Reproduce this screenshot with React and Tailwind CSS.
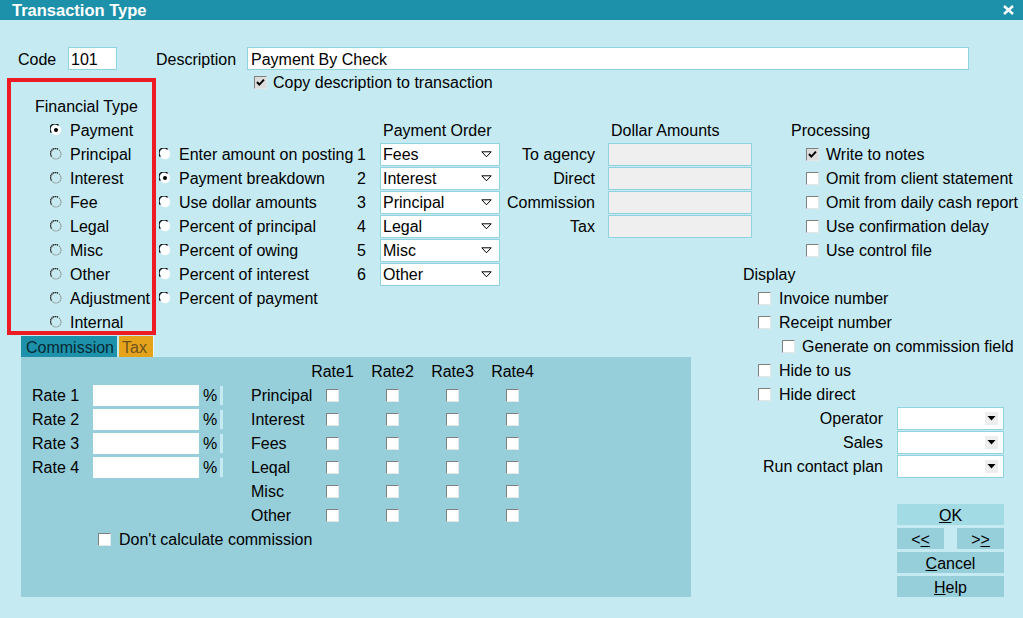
import React from "react";

const Check = ({ checked }) => (
  <span
    className={`relative inline-flex items-center justify-center w-[13px] h-[13px] shrink-0 border border-t-[#808080] border-l-[#808080] border-r-[#e6e6e6] border-b-[#e6e6e6] ${
      checked ? "bg-[#dcdcdc]" : "bg-white"
    }`}
  >
    {checked && (
      <svg width="11" height="11" viewBox="0 0 11 11">
        <path d="M2 5 L4.3 7.6 L9 2.6" stroke="#000" strokeWidth="1.9" fill="none" />
      </svg>
    )}
  </span>
);

const Radio = ({ on, dim }) => (
  <svg width="12" height="12" viewBox="0 0 12 12" className="shrink-0">
    {dim && !on ? (
      <>
        <circle cx="6" cy="6" r="5" fill="none" stroke="#8a8a8a" strokeWidth="1.1" strokeDasharray="1.3 0.7" />
        <path d="M1.4 8.4 A5 5 0 0 1 8.4 1.4" fill="none" stroke="#222" strokeWidth="1.1" strokeDasharray="1.5 0.5" />
      </>
    ) : (
      <>
        <circle cx="6" cy="6" r="5.2" fill="#fff" />
        <path d="M1.4 8.6 A5 5 0 0 1 8.6 1.4" fill="none" stroke="#000" strokeWidth="1.3" />
        {on && <circle cx="6" cy="6" r="2" fill="#000" />}
      </>
    )}
  </svg>
);

const T = ({ children, className = "" }) => <span className={`pt-[2px] ${className}`}>{children}</span>;

const Sel = ({ value }) => (
  <div className="w-[120px] h-[23px] bg-white border border-[#8fd3df] flex items-center justify-between pl-[2px] pr-[7px]">
    <T>{value}</T>
    <svg width="11" height="7" viewBox="0 0 11 7">
      <polygon points="0.8,0.8 10.2,0.8 5.5,5.8" fill="none" stroke="#000" strokeWidth="1" />
    </svg>
  </div>
);

const DropSel = () => (
  <div className="w-[107px] h-[23px] bg-white border border-[#8fd3df] flex items-center justify-end pr-[5px]">
    <span className="w-[13px] h-[13px] bg-[#eeeeee] flex items-center justify-center">
      <svg width="9" height="5" viewBox="0 0 9 5">
        <polygon points="0.5,0 8.5,0 4.5,4.5" fill="#000" />
      </svg>
    </span>
  </div>
);

const fin = ["Payment", "Principal", "Interest", "Fee", "Legal", "Misc", "Other", "Adjustment", "Internal"];

const mid = [
  ["Enter amount on posting", false, "1", "Fees", "To agency"],
  ["Payment breakdown", true, "2", "Interest", "Direct"],
  ["Use dollar amounts", false, "3", "Principal", "Commission"],
  ["Percent of principal", false, "4", "Legal", "Tax"],
  ["Percent of owing", false, "5", "Misc", null],
  ["Percent of interest", false, "6", "Other", null],
  ["Percent of payment", false, null, null, null],
];

const processing = [
  ["Write to notes", true],
  ["Omit from client statement", false],
  ["Omit from daily cash report", false],
  ["Use confirmation delay", false],
  ["Use control file", false],
];

const tableRows = ["Principal", "Interest", "Fees", "Leqal", "Misc", "Other"];

export default function App() {
  return (
    <div className="w-[1023px] h-[618px] bg-[#c5eaf2] text-black text-[16px] leading-none font-['Liberation_Sans',Arial,sans-serif] overflow-hidden">
      {/* Title bar */}
      <div className="h-[20px] bg-[#1e91aa] flex items-center justify-between pl-[12px] pr-[9px]">
        <span className="text-white font-bold text-[16.5px] pt-[1px]">Transaction Type</span>
        <svg width="11" height="10" viewBox="0 0 11 10">
          <path d="M1 1 L10 9 M10 1 L1 9" stroke="#fff" strokeWidth="2.4" />
        </svg>
      </div>

      {/* Code / Description */}
      <div className="flex items-center h-[23px] mt-[27px] pl-[18px]">
        <T className="w-[50px]">Code</T>
        <div className="w-[49px] h-[23px] bg-white border border-[#8fd3df] flex items-center pl-[2px]">
          <T>101</T>
        </div>
        <T className="ml-[39px] w-[91px]">Description</T>
        <div className="w-[722px] h-[23px] bg-white border border-[#8fd3df] flex items-center pl-[3px]">
          <T>Payment By Check</T>
        </div>
      </div>

      <div className="flex">
        {/* Left part */}
        <div className="w-[752px] shrink-0 pl-[7px] flex flex-col">
          <div className="flex">
            {/* Red box */}
            <div className="mt-[8px] w-[149px] shrink-0 h-[257px] border-4 border-[#ed1c24] pt-[12px]">
              <div className="h-[24px] flex items-center pl-[24px]">
                <T>Financial Type</T>
              </div>
              {fin.map((f, i) => (
                <div key={f} className="h-[24px] flex items-center gap-[8px] pl-[39px]">
                  <Radio on={i === 0} dim />
                  <T>{f}</T>
                </div>
              ))}
            </div>

            {/* Middle */}
            <div className="flex flex-col shrink-0">
              <div className="h-[24px] flex items-center gap-[6px] pl-[98px]">
                <Check checked />
                <T>Copy description to transaction</T>
              </div>
              <div className="h-[24px]" />
              <div className="h-[24px] flex items-center">
                <div className="w-[200px]" />
                <div className="w-[24px]" />
                <T className="w-[120px] pl-[3px]">Payment Order</T>
                <div className="w-[95px]" />
                <div className="w-[13px]" />
                <T className="pl-[3px]">Dollar Amounts</T>
              </div>
              {mid.map(([a, on, n, s, d]) => (
                <div key={a} className="h-[24px] flex items-center">
                  <div className="w-[200px] flex items-center gap-[8px] pl-[3px]">
                    <Radio on={on} />
                    <T>{a}</T>
                  </div>
                  <T className="w-[24px] text-right pr-[14px]">{n}</T>
                  <div className="w-[120px]">{s && <Sel value={s} />}</div>
                  <T className="w-[95px] text-right">{d}</T>
                  <div className="w-[13px]" />
                  {d && <div className="w-[144px] h-[23px] bg-[#efefef] border border-[#8fd3df]" />}
                </div>
              ))}
            </div>
          </div>

          {/* Tabs */}
          <div className="mt-[1px] ml-[14px] flex h-[21px] gap-[2px]">
            <div className="w-[96px] bg-[#1e91aa] text-[#062a32] flex items-center pl-[5px]">
              <T>Commission</T>
            </div>
            <div className="w-[35px] bg-[#e5a31b] text-[#6e5220] flex items-center pl-[3px] border-r border-[#e8f6f9]">
              <T>Tax</T>
            </div>
          </div>

          {/* Panel */}
          <div className="ml-[14px] w-[670px] h-[240px] bg-[#96ced9] pt-[2px] flex flex-col">
            <div className="flex">
              <div className="w-[230px] pt-[24px] pl-[11px]">
                {[1, 2, 3, 4].map((r) => (
                  <div key={r} className="h-[24px] flex items-center">
                    <T className="w-[61px]">Rate {r}</T>
                    <div className="w-[106px] h-[21px] bg-white" />
                    <T className="ml-[4px] w-[13px]">%</T>
                    <div className="ml-[4px] w-[3px] h-[19px] bg-[#c5eaf2]" />
                  </div>
                ))}
              </div>
              <div className="flex flex-col">
                <div className="h-[24px] flex items-center">
                  <div className="w-[51px]" />
                  {["Rate1", "Rate2", "Rate3", "Rate4"].map((r) => (
                    <T key={r} className="w-[60px] text-center pl-[1px]">{r}</T>
                  ))}
                </div>
                {tableRows.map((t) => (
                  <div key={t} className="h-[24px] flex items-center">
                    <T className="w-[51px]">{t}</T>
                    {[0, 1, 2, 3].map((c) => (
                      <div key={c} className="w-[60px] flex justify-center pl-[1px]">
                        <Check />
                      </div>
                    ))}
                  </div>
                ))}
              </div>
            </div>
            <div className="h-[24px] flex items-center gap-[8px] pl-[77px]">
              <Check />
              <T>Don't calculate commission</T>
            </div>
          </div>
        </div>

        {/* Right part */}
        <div className="flex-1 pt-[48px] flex flex-col">
          <div className="h-[24px] flex items-center pl-[39px]">
            <T>Processing</T>
          </div>
          {processing.map(([p, c]) => (
            <div key={p} className="h-[24px] flex items-center gap-[7px] pl-[54px]">
              <Check checked={c} />
              <T>{p}</T>
            </div>
          ))}
          <div className="h-[24px] flex items-center -ml-[9px]">
            <T>Display</T>
          </div>
          <div className="h-[24px] flex items-center gap-[8px] pl-[6px]">
            <Check />
            <T>Invoice number</T>
          </div>
          <div className="h-[24px] flex items-center gap-[8px] pl-[6px]">
            <Check />
            <T>Receipt number</T>
          </div>
          <div className="h-[24px] flex items-center gap-[7px] pl-[30px]">
            <Check />
            <T>Generate on commission field</T>
          </div>
          <div className="h-[24px] flex items-center gap-[8px] pl-[6px]">
            <Check />
            <T>Hide to us</T>
          </div>
          <div className="h-[24px] flex items-center gap-[8px] pl-[6px]">
            <Check />
            <T>Hide direct</T>
          </div>
          {["Operator", "Sales", "Run contact plan"].map((o) => (
            <div key={o} className="h-[24px] flex items-center">
              <T className="w-[131px] text-right">{o}</T>
              <div className="ml-[14px]">
                <DropSel />
              </div>
            </div>
          ))}
          <div className="mt-[26px] ml-[145px] w-[107px] flex flex-col gap-[3px]">
            <div className="h-[21px] bg-[#a2dbe4] flex items-center justify-center">
              <T>
                <u>O</u>K
              </T>
            </div>
            <div className="flex gap-[13px]">
              <div className="w-[47px] h-[21px] bg-[#96ced9] flex items-center justify-center">
                <T>
                  &lt;<u>&lt;</u>
                </T>
              </div>
              <div className="w-[47px] h-[21px] bg-[#96ced9] flex items-center justify-center">
                <T>
                  &gt;<u>&gt;</u>
                </T>
              </div>
            </div>
            <div className="h-[21px] bg-[#96ced9] flex items-center justify-center">
              <T>
                <u>C</u>ancel
              </T>
            </div>
            <div className="h-[21px] bg-[#96ced9] flex items-center justify-center">
              <T>
                <u>H</u>elp
              </T>
            </div>
          </div>
        </div>
      </div>
    </div>
  );
}
